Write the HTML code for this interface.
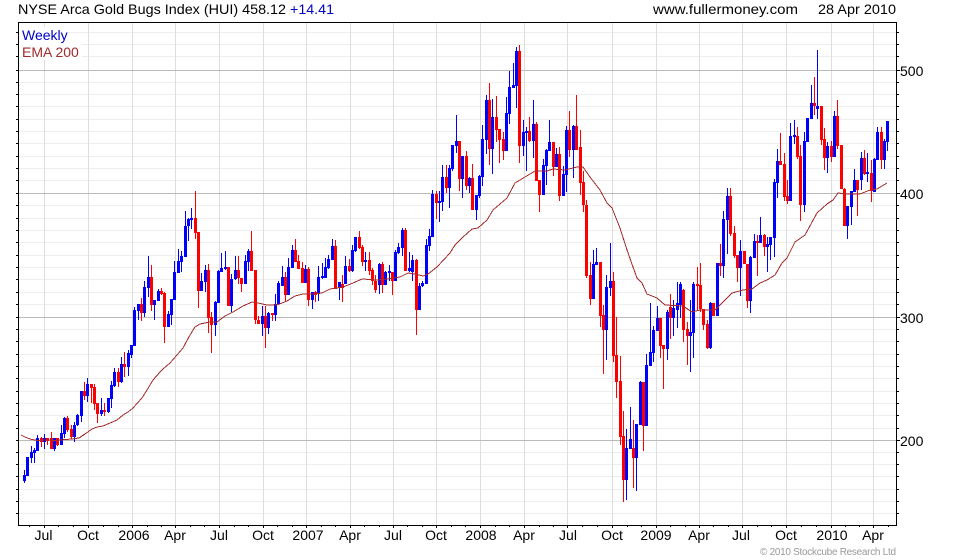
<!DOCTYPE html>
<html><head><meta charset="utf-8"><title>HUI</title>
<style>
html,body{margin:0;padding:0;background:#fff;width:980px;height:560px;overflow:hidden}
svg{display:block}
text{font-family:"Liberation Sans",Arial,sans-serif;font-size:14px;fill:#000}
</style></head><body>
<svg width="980" height="560" viewBox="0 0 980 560" xmlns="http://www.w3.org/2000/svg">
<g shape-rendering="crispEdges" fill="none">
<path stroke="#eeeeee" d="M19 32.5H896M19 44.5H896M19 56.5H896M19 82.5H896M19 94.5H896M19 106.5H896M19 119.5H896M19 131.5H896M19 143.5H896M19 156.5H896M19 168.5H896M19 180.5H896M19 205.5H896M19 218.5H896M19 230.5H896M19 242.5H896M19 255.5H896M19 267.5H896M19 279.5H896M19 292.5H896M19 304.5H896M19 329.5H896M19 341.5H896M19 354.5H896M19 366.5H896M19 378.5H896M19 391.5H896M19 403.5H896M19 415.5H896M19 428.5H896M19 452.5H896M19 464.5H896M19 476.5H896M19 489.5H896M19 501.5H896M19 513.5H896"/>
<path stroke="#dddddd" d="M44.5 23V525M88.5 23V525M132.5 23V525M175.5 23V525M219.5 23V525M263.5 23V525M306.5 23V525M350.5 23V525M393.5 23V525M436.5 23V525M480.5 23V525M524.5 23V525M567.5 23V525M612.5 23V525M656.5 23V525M699.5 23V525M742.5 23V525M786.5 23V525M831.5 23V525M873.5 23V525"/>
<path stroke="#bbbbbb" d="M19 70.5H896M19 193.5H896M19 317.5H896M19 440.5H896"/>
<rect x="19" y="27" width="49" height="17" fill="#fff"/>
<rect x="19" y="44" width="63" height="16" fill="#fff"/>
<!-- blue wicks -->
<path stroke="#0000ff" d="M24.5 470V483M27.5 457V476M31.5 446V463M34.5 448V463M37.5 435V451M44.5 434V449M54.5 438V451M61.5 425V445M64.5 417V438M74.5 422V442M77.5 414V426M81.5 391V422M87.5 378V402M101.5 398V416M108.5 398V413M111.5 381V408M114.5 368V387M121.5 357V383M128.5 350V376M131.5 345V358M134.5 307V346M138.5 304V320M144.5 281V317M148.5 256V297M154.5 300V320M158.5 289V301M168.5 311V327M171.5 299V325M174.5 261V300M178.5 249V273M181.5 251V272M185.5 211V257M188.5 218V241M191.5 208V229M201.5 273V291M205.5 265V292M215.5 301V336M218.5 270V303M221.5 253V272M225.5 251V270M231.5 274V312M235.5 256V280M245.5 255V284M248.5 249V271M262.5 306V336M268.5 312V334M275.5 294V321M278.5 281V304M282.5 266V286M288.5 258V295M292.5 245V268M305.5 265V283M312.5 292V309M318.5 266V301M322.5 263V279M325.5 258V278M328.5 255V269M332.5 239V260M339.5 282V300M345.5 256V284M352.5 245V272M355.5 237V252M365.5 252V271M379.5 263V294M385.5 271V285M389.5 265V281M395.5 250V281M398.5 243V254M402.5 228V256M409.5 252V272M412.5 255V281M419.5 283V310M422.5 281V287M426.5 239V284M429.5 229V251M432.5 190V237M439.5 191V222M442.5 165V211M449.5 165V208M452.5 145V171M456.5 115V153M462.5 156V198M469.5 177V193M476.5 195V220M479.5 175V198M482.5 125V186M486.5 95V154M492.5 99V174M506.5 97V151M509.5 71V124M513.5 63V88M516.5 47V108M523.5 120V156M526.5 127V171M533.5 100V158M543.5 159V195M546.5 149V185M549.5 120V151M556.5 148V167M563.5 166V196M566.5 126V192M573.5 125V178M593.5 250V299M596.5 248V265M606.5 275V360M610.5 243V296M626.5 429V500M630.5 407V449M636.5 424V491M640.5 381V425M646.5 354V426M650.5 303V366M653.5 326V362M657.5 306V331M667.5 310V360M673.5 300V336M677.5 282V328M680.5 282V318M690.5 300V372M693.5 282V358M710.5 302V349M717.5 263V316M723.5 211V278M727.5 188V254M740.5 240V296M750.5 256V313M754.5 234V258M760.5 217V243M767.5 237V272M770.5 237V260M774.5 179V257M777.5 149V198M790.5 123V201M794.5 120V144M804.5 132V212M807.5 118V142M811.5 85V119M817.5 50V119M827.5 142V173M834.5 111V157M847.5 206V239M851.5 191V225M854.5 169V192M861.5 152V190M867.5 153V182M874.5 158V192M877.5 127V160M884.5 139V169M887.5 121V151"/>
<!-- blue bodies -->
<path stroke="#0000ff" stroke-width="3" d="M24.5 475V481M27.5 457V476M31.5 452V458M34.5 450V453M37.5 438V451M44.5 438V442M54.5 438V449M61.5 433V445M64.5 418V434M74.5 425V437M77.5 415V425M81.5 391V416M87.5 384V396M101.5 410V414M108.5 398V412M111.5 385V399M114.5 372V386M121.5 364V382M128.5 353V367M131.5 345V355M134.5 310V346M138.5 304V311M144.5 287V313M148.5 277V288M154.5 300V305M158.5 291V301M168.5 314V327M171.5 299V315M174.5 272V300M178.5 261V273M181.5 256V262M185.5 226V257M188.5 219V226M191.5 218V220M201.5 281V291M205.5 270V282M215.5 302V325M218.5 271V303M221.5 268V272M225.5 267V269M231.5 279V306M235.5 270V279M245.5 261V284M248.5 251V262M262.5 316V324M268.5 313V328M275.5 304V315M278.5 283V304M282.5 277V286M288.5 267V295M292.5 250V268M305.5 269V283M312.5 292V300M318.5 277V294M322.5 276V278M325.5 267V278M328.5 259V268M332.5 246V260M339.5 282V288M345.5 266V284M352.5 250V271M355.5 237V251M365.5 260V262M379.5 264V285M385.5 272V285M389.5 271V273M395.5 252V281M398.5 247V253M402.5 230V248M409.5 268V271M412.5 260V272M419.5 286V310M422.5 283V286M426.5 245V284M429.5 236V246M432.5 194V237M439.5 201V203M442.5 177V202M449.5 168V188M452.5 145V169M456.5 141V146M462.5 156V179M469.5 178V186M476.5 195V210M479.5 176V196M482.5 139V177M486.5 100V140M492.5 117V149M506.5 113V151M509.5 87V114M513.5 85V88M516.5 51V86M523.5 132V146M526.5 131V133M533.5 124V141M543.5 165V195M546.5 150V166M549.5 142V151M556.5 154V167M563.5 174V196M566.5 130V175M573.5 126V150M593.5 264V299M596.5 262V265M606.5 287V330M610.5 281V288M626.5 448V480M630.5 439V449M636.5 424V458M640.5 382V425M646.5 365V426M650.5 352V366M653.5 330V353M657.5 318V331M667.5 312V349M673.5 308V318M677.5 303V310M680.5 284V305M690.5 332V336M693.5 284V333M710.5 303V348M717.5 263V316M723.5 219V266M727.5 196V220M740.5 251V268M750.5 257V301M754.5 241V258M760.5 235V243M767.5 244V247M770.5 237V245M774.5 182V238M777.5 161V183M790.5 136V201M794.5 135V137M804.5 141V205M807.5 118V142M811.5 103V119M817.5 106V109M827.5 146V158M834.5 116V157M847.5 206V226M851.5 191V207M854.5 180V192M861.5 158V180M867.5 172V174M874.5 159V192M877.5 132V160M884.5 141V160M887.5 121V142"/>
<!-- red wicks -->
<path stroke="#ff0000" d="M41.5 437V447M47.5 438V445M51.5 432V449M57.5 438V446M67.5 416V432M71.5 425V439M84.5 382V400M91.5 384V403M94.5 384V410M97.5 403V423M104.5 403V416M118.5 368V387M124.5 352V377M141.5 298V321M151.5 265V311M161.5 288V295M164.5 292V343M195.5 191V239M198.5 232V308M208.5 264V333M211.5 312V353M228.5 267V306M238.5 256V284M241.5 278V292M251.5 231V271M255.5 270V324M258.5 316V324M265.5 306V348M272.5 313V321M285.5 272V302M295.5 239V262M298.5 255V269M302.5 262V283M308.5 267V306M315.5 291V302M335.5 240V289M342.5 275V302M349.5 259V272M359.5 231V249M362.5 245V266M369.5 252V275M372.5 268V285M375.5 275V293M382.5 262V293M392.5 272V295M405.5 228V271M416.5 259V335M436.5 191V219M446.5 165V193M459.5 141V191M466.5 151V190M472.5 164V210M489.5 83V165M496.5 96V142M499.5 129V163M503.5 132V160M519.5 45V163M529.5 117V142M536.5 122V181M539.5 180V212M553.5 142V176M559.5 147V201M569.5 111V157M576.5 95V150M580.5 130V195M583.5 171V212M586.5 200V278M590.5 262V305M600.5 262V327M603.5 305V374M613.5 272V362M616.5 317V398M620.5 356V445M623.5 411V502M633.5 420V488M643.5 382V451M660.5 318V358M663.5 345V389M670.5 294V339M683.5 289V342M687.5 322V365M697.5 267V310M700.5 263V312M703.5 309V330M707.5 320V349M713.5 303V316M720.5 244V276M730.5 188V236M734.5 226V258M737.5 255V282M744.5 251V264M747.5 264V308M757.5 235V276M764.5 234V256M780.5 133V165M784.5 153V201M787.5 180V204M797.5 127V159M800.5 145V221M814.5 77V115M821.5 106V145M824.5 128V170M831.5 141V162M837.5 100V149M841.5 145V189M844.5 188V226M857.5 180V216M864.5 150V175M871.5 160V202M881.5 127V169"/>
<!-- red bodies -->
<path stroke="#ff0000" stroke-width="3" d="M41.5 438V442M47.5 438V441M51.5 438V449M57.5 438V445M67.5 418V430M71.5 429V437M84.5 391V396M91.5 384V388M94.5 387V404M97.5 403V414M104.5 410V412M118.5 372V382M124.5 364V367M141.5 304V313M151.5 277V305M161.5 291V294M164.5 293V327M195.5 218V233M198.5 232V291M208.5 270V318M211.5 317V325M228.5 267V306M238.5 270V278M241.5 278V284M251.5 251V271M255.5 270V320M258.5 320V324M265.5 316V328M272.5 313V315M285.5 277V295M295.5 250V262M298.5 261V269M302.5 268V283M308.5 269V300M315.5 292V295M335.5 246V289M342.5 284V288M349.5 266V271M359.5 237V248M362.5 247V262M369.5 260V271M372.5 270V281M375.5 281V290M382.5 264V285M392.5 272V281M405.5 230V271M416.5 260V310M436.5 194V203M446.5 177V188M459.5 141V179M466.5 156V186M472.5 178V210M489.5 100V149M496.5 117V130M499.5 129V140M503.5 139V151M519.5 51V146M529.5 131V141M536.5 124V181M539.5 180V195M553.5 142V167M559.5 154V196M569.5 130V150M576.5 126V150M580.5 147V183M583.5 182V205M586.5 205V276M590.5 275V299M600.5 262V316M603.5 315V330M613.5 281V356M616.5 355V382M620.5 381V437M623.5 436V480M633.5 448V458M643.5 382V426M660.5 318V346M663.5 345V349M670.5 307V318M683.5 290V330M687.5 329V336M697.5 284V286M700.5 285V309M703.5 309V325M707.5 324V348M713.5 303V316M720.5 263V266M730.5 196V234M734.5 233V256M737.5 255V268M744.5 251V264M747.5 264V301M757.5 241V243M764.5 235V247M780.5 161V165M784.5 164V197M787.5 196V201M797.5 136V157M800.5 156V205M814.5 103V106M821.5 106V140M824.5 139V158M831.5 146V157M837.5 116V146M841.5 145V189M844.5 189V226M857.5 180V190M864.5 158V174M871.5 173V191M881.5 132V160"/>
<!-- EMA -->
<polyline stroke="#a52a2a" points="21,435 25,437 30,439 37,440.5 47,440 57,440.5 65,439.5 72,439 79,438 85,434 92,429 97,427 103,426 110,423 117,420 123,415 128,412 133,408 142,398 147,390 153,380 160,372 163,369 170,363 177,355 183,348 190,335 195,327 200,324 210,322 217,322 225,316 233,312 243,306 252,302 258,303 267,305 277,305 287,301 295,296 303,294 313,294 322,293 330,289 343,287 353,283 362,279 377,280 387,279 400,277 408,273 415,274 423,276 428,274 437,267 450,253 455,245 463,237 472,229 478,228 487,220 493,210 507,198 515,183 525,177 535,171 547,171 553,169 565,170 577,167 583,167 590,177 600,190 607,203 612,208 620,228 627,250 633,267 637,278 642,283 647,294 657,298 665,305 683,306 692,312 700,310 715,310 725,300 732,293 743,290 752,289 760,283 767,280 775,275 782,263 787,258 795,242 805,235 817,213 827,204 833,200 838,193 847,194 860,194 870,190 877,189 887,183"/>
<!-- frame -->
<path stroke="#000" d="M18 22.5H897M18.5 22V526M896.5 22V526M18 525.5H897"/>
<path stroke="#000" d="M16 32.5H18M16 44.5H18M16 56.5H18M16 70.5H18M16 82.5H18M16 94.5H18M16 106.5H18M16 119.5H18M16 131.5H18M16 143.5H18M16 156.5H18M16 168.5H18M16 180.5H18M16 193.5H18M16 205.5H18M16 218.5H18M16 230.5H18M16 242.5H18M16 255.5H18M16 267.5H18M16 279.5H18M16 292.5H18M16 304.5H18M16 317.5H18M16 329.5H18M16 341.5H18M16 354.5H18M16 366.5H18M16 378.5H18M16 391.5H18M16 403.5H18M16 415.5H18M16 428.5H18M16 440.5H18M16 452.5H18M16 464.5H18M16 476.5H18M16 489.5H18M16 501.5H18M16 513.5H18"/>
<path stroke="#000" d="M897 32.5H899M897 44.5H899M897 56.5H899M897 70.5H900M897 82.5H899M897 94.5H899M897 106.5H899M897 119.5H899M897 131.5H899M897 143.5H899M897 156.5H899M897 168.5H899M897 180.5H899M897 193.5H900M897 205.5H899M897 218.5H899M897 230.5H899M897 242.5H899M897 255.5H899M897 267.5H899M897 279.5H899M897 292.5H899M897 304.5H899M897 317.5H900M897 329.5H899M897 341.5H899M897 354.5H899M897 366.5H899M897 378.5H899M897 391.5H899M897 403.5H899M897 415.5H899M897 428.5H899M897 440.5H900M897 452.5H899M897 464.5H899M897 476.5H899M897 489.5H899M897 501.5H899M897 513.5H899"/>
<path stroke="#000" d="M29.5 526V527M44.5 526V528M58.5 526V527M73.5 526V527M88.5 526V528M103.5 526V527M118.5 526V527M132.5 526V528M147.5 526V527M161.5 526V527M175.5 526V528M190.5 526V527M204.5 526V527M219.5 526V528M234.5 526V527M248.5 526V527M263.5 526V528M277.5 526V527M292.5 526V527M306.5 526V528M321.5 526V527M335.5 526V527M350.5 526V528M364.5 526V527M379.5 526V527M393.5 526V528M407.5 526V527M422.5 526V527M436.5 526V528M451.5 526V527M465.5 526V527M480.5 526V528M495.5 526V527M509.5 526V527M524.5 526V528M539.5 526V527M553.5 526V527M567.5 526V528M582.5 526V527M597.5 526V527M612.5 526V528M627.5 526V527M641.5 526V527M656.5 526V528M670.5 526V527M685.5 526V527M699.5 526V528M713.5 526V527M728.5 526V527M742.5 526V528M757.5 526V527M771.5 526V527M786.5 526V528M801.5 526V527M816.5 526V527M831.5 526V528M845.5 526V527M859.5 526V527M873.5 526V528M888.5 526V527"/>
</g>
<text x="18" y="14" textLength="268" lengthAdjust="spacingAndGlyphs">NYSE Arca Gold Bugs Index (HUI) 458.12</text>
<text x="290" y="14" textLength="44" lengthAdjust="spacingAndGlyphs" style="fill:#0000cc">+14.41</text>
<text x="653" y="14" textLength="145" lengthAdjust="spacingAndGlyphs">www.fullermoney.com</text>
<text x="818" y="14" textLength="78" lengthAdjust="spacingAndGlyphs">28 Apr 2010</text>
<text x="22" y="40" style="fill:#0000cc">Weekly</text>
<text x="22" y="57" style="fill:#a52a2a">EMA 200</text>
<text x="900" y="76">500</text>
<text x="900" y="199">400</text>
<text x="900" y="323">300</text>
<text x="900" y="446">200</text>
<g text-anchor="middle">
<text x="43.5" y="540">Jul</text><text x="88" y="540">Oct</text><text x="134" y="540">2006</text><text x="175" y="540">Apr</text><text x="219" y="540">Jul</text><text x="263" y="540">Oct</text><text x="308" y="540">2007</text><text x="350" y="540">Apr</text><text x="393" y="540">Jul</text><text x="436" y="540">Oct</text><text x="481" y="540">2008</text><text x="524" y="540">Apr</text><text x="568" y="540">Jul</text><text x="612" y="540">Oct</text><text x="656" y="540">2009</text><text x="699" y="540">Apr</text><text x="741" y="540">Jul</text><text x="786" y="540">Oct</text><text x="832" y="540">2010</text><text x="873" y="540">Apr</text>
</g>
<text x="760" y="555" textLength="136" style="font-size:10px;fill:#999999">© 2010 Stockcube Research Ltd</text>
</svg>
</body></html>
